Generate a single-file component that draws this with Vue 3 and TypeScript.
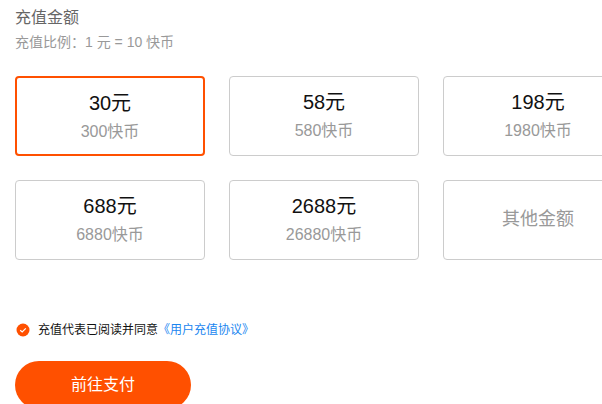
<script setup lang="ts">
import { ref } from 'vue';

interface Plan {
  yuan: string;
  coin?: string;
}

const plans: Plan[] = [
  { yuan: '30元', coin: '300快币' },
  { yuan: '58元', coin: '580快币' },
  { yuan: '198元', coin: '1980快币' },
  { yuan: '688元', coin: '6880快币' },
  { yuan: '2688元', coin: '26880快币' },
  { yuan: '其他金额' },
];

const active = ref(0);
const agreed = ref(true);
</script>

<template>
  <div class="recharge">
    <div class="title">充值金额</div>
    <div class="ratio">充值比例：1 元 = 10 快币</div>

    <div class="plans">
      <div
        v-for="(plan, i) in plans"
        :key="plan.yuan"
        class="plan"
        :class="{ active: active === i }"
        @click="active = i"
      >
        <template v-if="plan.coin">
          <div class="yuan">{{ plan.yuan }}</div>
          <div class="coin">{{ plan.coin }}</div>
        </template>
        <div v-else class="other">{{ plan.yuan }}</div>
      </div>
    </div>

    <div class="agree" @click="agreed = !agreed">
      <svg class="check" width="14" height="14" viewBox="0 0 14 14">
        <circle cx="7" cy="7" r="6.5" fill="#ff5000" />
        <path d="M4.2 7.2 6.2 9 9.8 5.4" fill="none" stroke="#fff" stroke-width="1.2" />
      </svg>
      <span>充值代表已阅读并同意</span>
      <a class="link">《用户充值协议》</a>
    </div>

    <button class="pay">前往支付</button>
  </div>
</template>

<style>
html,
body {
  margin: 0;
  overflow: hidden;
  background: #fff;
}
</style>

<style scoped>
.recharge {
  width: 602px;
  height: 404px;
  box-sizing: border-box;
  padding: 7px 0 0 15px;
  overflow: hidden;
  font-family: "Liberation Sans", "Noto Sans CJK SC", sans-serif;
}

.title {
  font-size: 16px;
  line-height: 22px;
  color: #666;
}

.ratio {
  margin-top: 4px;
  font-size: 14px;
  line-height: 18px;
  color: #999;
}

.plans {
  display: grid;
  grid-template-columns: repeat(3, 190px);
  grid-auto-rows: 80px;
  gap: 24px;
  margin-top: 25px;
}

.plan {
  display: flex;
  flex-direction: column;
  align-items: center;
  justify-content: center;
  box-sizing: border-box;
  padding-bottom: 2px;
  border: 1px solid #ccc;
  border-radius: 4px;
  cursor: pointer;
}

.plan.active {
  padding-bottom: 0;
  border: 2px solid #ff5000;
}

.yuan {
  font-size: 20px;
  line-height: 26px;
  color: #111;
}

.coin {
  margin-top: 5px;
  font-size: 16px;
  line-height: 22px;
  color: #999;
}

.other {
  margin-bottom: 4px;
  font-size: 18px;
  color: #999;
}

.agree {
  display: flex;
  align-items: center;
  margin-top: 60px;
  font-size: 12px;
  line-height: 20px;
  color: #111;
  cursor: pointer;
}

.check {
  margin: 0 8px 0 1px;
}

.link {
  color: #1a86f0;
}

.pay {
  display: block;
  width: 176px;
  height: 48px;
  margin-top: 21px;
  padding: 0 0 4px;
  font-family: inherit;
  font-size: 16px;
  color: #fff;
  cursor: pointer;
  background: #ff5000;
  border: none;
  border-radius: 24px;
}
</style>
